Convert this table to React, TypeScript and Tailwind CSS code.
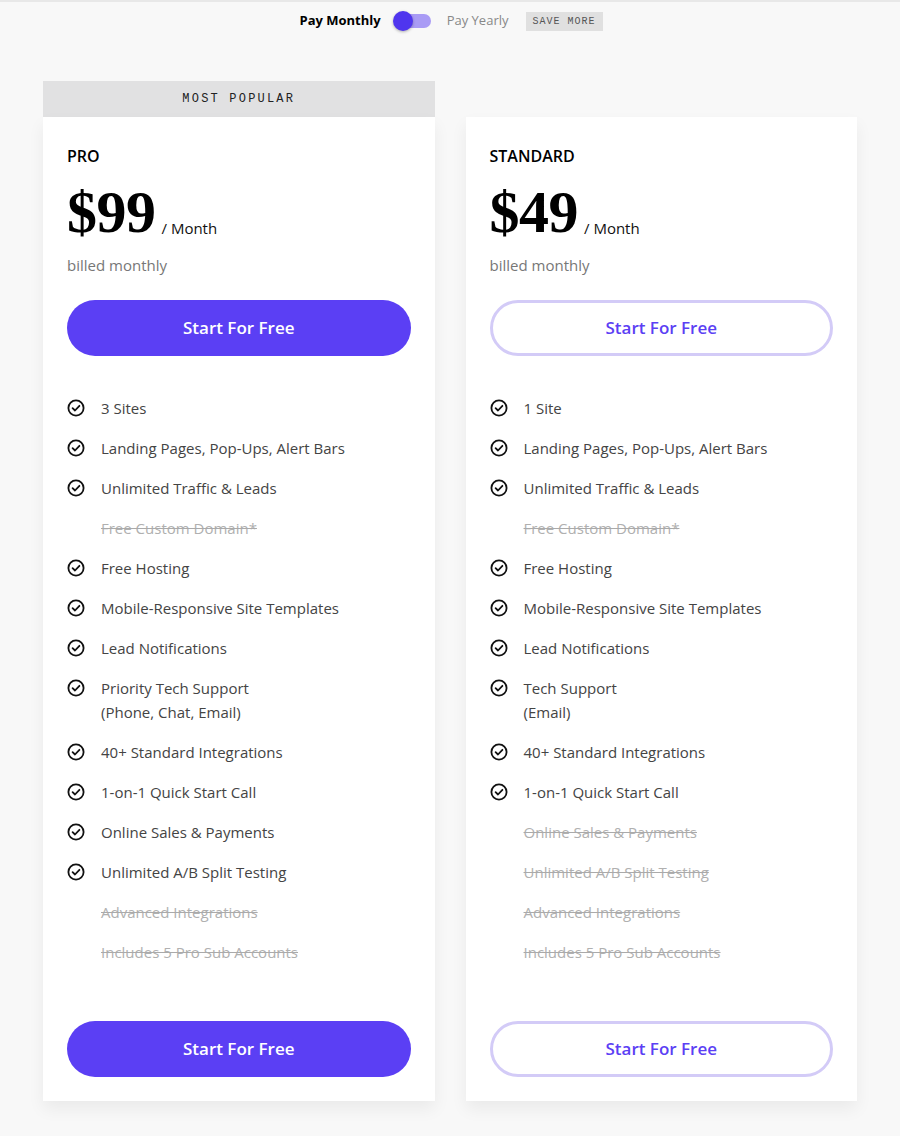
import React from "react";

const sans = { fontFamily: "'Open Sans', 'Noto Sans', sans-serif" };

type Feature = { text: string; sub?: string; off?: boolean };

const pro: Feature[] = [
  { text: "3 Sites" },
  { text: "Landing Pages, Pop-Ups, Alert Bars" },
  { text: "Unlimited Traffic & Leads" },
  { text: "Free Custom Domain*", off: true },
  { text: "Free Hosting" },
  { text: "Mobile-Responsive Site Templates" },
  { text: "Lead Notifications" },
  { text: "Priority Tech Support", sub: "(Phone, Chat, Email)" },
  { text: "40+ Standard Integrations" },
  { text: "1-on-1 Quick Start Call" },
  { text: "Online Sales & Payments" },
  { text: "Unlimited A/B Split Testing" },
  { text: "Advanced Integrations", off: true },
  { text: "Includes 5 Pro Sub Accounts", off: true },
];

const standard: Feature[] = [
  { text: "1 Site" },
  { text: "Landing Pages, Pop-Ups, Alert Bars" },
  { text: "Unlimited Traffic & Leads" },
  { text: "Free Custom Domain*", off: true },
  { text: "Free Hosting" },
  { text: "Mobile-Responsive Site Templates" },
  { text: "Lead Notifications" },
  { text: "Tech Support", sub: "(Email)" },
  { text: "40+ Standard Integrations" },
  { text: "1-on-1 Quick Start Call" },
  { text: "Online Sales & Payments", off: true },
  { text: "Unlimited A/B Split Testing", off: true },
  { text: "Advanced Integrations", off: true },
  { text: "Includes 5 Pro Sub Accounts", off: true },
];

function Check() {
  return (
    <svg width="18" height="18" viewBox="0 0 18 18" fill="none" className="shrink-0 mt-[3px]">
      <circle cx="9" cy="9" r="7.6" stroke="#111" strokeWidth="1.8" />
      <path d="M5.6 9.2 L8 11.5 L12.4 6.8" stroke="#111" strokeWidth="1.8" strokeLinecap="round" strokeLinejoin="round" />
    </svg>
  );
}

function Btn({ filled }: { filled: boolean }) {
  return filled ? (
    <button className="w-full h-[56px] rounded-full bg-[#5b3ff4] text-white text-[17px] font-semibold">
      Start For Free
    </button>
  ) : (
    <button className="w-full h-[56px] rounded-full bg-white border-[3px] border-[#d3cbf7] text-[#5b3ff4] text-[17px] font-semibold">
      Start For Free
    </button>
  );
}

function Card({ name, price, features, filled }: { name: string; price: string; features: Feature[]; filled: boolean }) {
  return (
    <div className="bg-white px-6 pt-[29px] pb-[24px] shadow-[0_8px_16px_rgba(0,0,0,0.06)]">
      <div className="text-[16px] font-semibold text-black leading-[20px]">{name}</div>
      <div className="flex items-end mt-[18px] h-[56px]">
        <span className="text-[60px] font-bold leading-[56px] text-black tracking-[-0.5px]" style={{ fontFamily: "'Liberation Serif', 'DejaVu Serif', serif" }}>
          {price}
        </span>
        <span className="text-[15px] text-[#111] ml-[6px] mb-[1px]">/ Month</span>
      </div>
      <div className="text-[15px] text-[#777] mt-[15px] leading-[20px]">billed monthly</div>
      <div className="mt-[25px]">
        <Btn filled={filled} />
      </div>
      <ul className="mt-[40px] flex flex-col gap-4">
        {features.map((f, i) => (
          <li key={i} className="flex gap-[16px] text-[15px] leading-[24px]">
            {f.off ? <span className="w-[18px] shrink-0" /> : <Check />}
            <div className={f.off ? "text-[#b0b0b0] line-through decoration-[#aaa]" : "text-[#444]"}>
              <div>{f.text}</div>
              {f.sub && <div>{f.sub}</div>}
            </div>
          </li>
        ))}
      </ul>
      <div className="mt-[57px]">
        <Btn filled={filled} />
      </div>
    </div>
  );
}

export default function App() {
  return (
    <div className="min-h-[1136px] bg-[#f8f8f8] border-t-2 border-[#e8e8e8]" style={sans}>
      <div className="flex items-center justify-center h-[38px] pl-[2px]">
        <span className="text-[13px] font-bold text-black">Pay Monthly</span>
        <div className="relative ml-[12px] w-[38px] h-[20px] flex items-center">
          <div className="absolute left-[6px] right-0 h-[14px] rounded-full bg-[#a99bf5]" />
          <div className="absolute left-0 w-[20px] h-[20px] rounded-full bg-[#4f35ee] shadow-[0_1px_3px_rgba(0,0,0,0.3)]" />
        </div>
        <span className="ml-[16px] text-[13px] text-[#888]">Pay Yearly</span>
        <span
          className="ml-[17px] bg-[#e0e0e0] text-[#555] text-[10px] px-[7px] h-[19px] flex items-center tracking-[1px]"
          style={{ fontFamily: "'Liberation Mono', 'DejaVu Sans Mono', monospace" }}
        >
          SAVE MORE
        </span>
      </div>
      <div className="grid grid-cols-2 gap-[31px] px-[43px] mt-[41px]">
        <div>
          <div
            className="h-[36px] bg-[#e1e1e2] flex items-center justify-center text-[12px] text-[#222] tracking-[2.2px]"
            style={{ fontFamily: "'Liberation Mono', 'DejaVu Sans Mono', monospace" }}
          >
            MOST POPULAR
          </div>
          <Card name="PRO" price="$99" features={pro} filled />
        </div>
        <div className="pt-[36px]">
          <Card name="STANDARD" price="$49" features={standard} filled={false} />
        </div>
      </div>
    </div>
  );
}
